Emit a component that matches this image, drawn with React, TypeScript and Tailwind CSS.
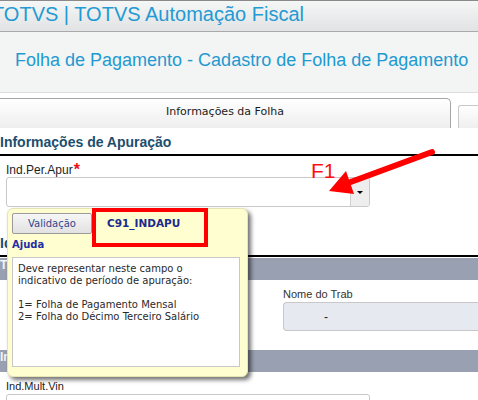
import React from "react";

const sans = { fontFamily: '"Liberation Sans", Arial, sans-serif' };
const verd = { fontFamily: '"DejaVu Sans", Verdana, sans-serif' };

export default function App() {
  return (
    <div
      className="relative w-[478px] h-[400px] overflow-hidden bg-white"
      style={sans}
    >
      {/* Header */}
      <div className="h-[32px] border-t border-b border-t-[#8a8a8a] border-b-[#a9a9a9] bg-gradient-to-b from-[#f5f6f6] to-[#e1e3e4] overflow-hidden whitespace-nowrap">
        <div className="ml-[-8px] pt-[1px] text-[20px] leading-[24px] text-[#239ad3]">
          TOTVS | TOTVS Automação Fiscal
        </div>
      </div>

      {/* Sub header */}
      <div className="h-[61px] bg-[#f3f4f4] border-b border-[#dedede] pl-[15px] pt-[18px] whitespace-nowrap">
        <div className="text-[18px] leading-[20px] text-[#1f9ad0]">
          Folha de Pagamento - Cadastro de Folha de Pagamento
        </div>
      </div>
      <div className="h-[5px] bg-white" />

      {/* Tabs */}
      <div className="flex items-end h-[30px]">
        <div className="w-[451px] h-[30px] border-t border-r border-[#a6a6a6] rounded-tr-[5px] bg-gradient-to-b from-white to-[#eeeeee] flex items-center justify-center pb-[2px]">
          <span className="text-[11px] text-[#1a1a1a]" style={verd}>
            Informações da Folha
          </span>
        </div>
        <div className="ml-[7px] flex-1 h-[23px] border-t border-l border-[#c8c8c8] rounded-tl-[3px] bg-gradient-to-b from-white to-[#efefef]" />
      </div>

      {/* Section heading */}
      <div className="pt-[6px] pb-[4px] border-b-2 border-black">
        <div className="text-[14px] leading-[16px] font-bold text-[#1c4e6e] whitespace-nowrap">
          Informações de Apuração
        </div>
      </div>

      {/* Ind.Per.Apur */}
      <div className="pl-[6px] pt-[7px]">
        <div className="text-[12px] leading-[14px] text-[#1e1e1e] flex items-start">
          <span>Ind.Per.Apur</span>
          <span className="text-[16px] leading-[12px] font-bold text-[#e81010] ml-[1px] mt-[1px]">*</span>
        </div>
        <div className="w-[364px] h-[30px] border border-[#c9c9c9] rounded-[3px] bg-white flex justify-end overflow-hidden">
          <div className="w-[19px] h-full bg-[#eeeeee] border-l border-[#d0d0d0] flex items-center justify-center">
            <div className="w-0 h-0 border-l-[3px] border-r-[3px] border-t-[3px] border-l-transparent border-r-transparent border-t-black" />
          </div>
        </div>
      </div>

      {/* Second section */}
      <div className="mt-[28px] pb-[4px] border-b-2 border-black">
        <div className="text-[14px] leading-[16px] font-bold text-[#1c4e6e] whitespace-nowrap">
          Identificação do Trabalhador
        </div>
      </div>
      <div className="mt-[1px] h-[22px] bg-[#98a0b1]">
        <div className="text-[12px] leading-[14px] font-bold text-[#f4f4f8] whitespace-nowrap">
          Trabalhador
        </div>
      </div>

      <div className="flex pt-[8px]">
        <div className="w-[283px] shrink-0" />
        <div className="flex-1">
          <div className="text-[11px] leading-[13px] text-[#333]">Nome do Trab</div>
          <div className="mt-[1px] h-[29px] border border-r-0 border-[#c8c8c8] rounded-l-[4px] bg-[#e6e9ef] flex items-center pl-[40px] text-[12px] text-[#222]">
            -
          </div>
        </div>
      </div>

      <div className="mt-[19px] h-[22px] bg-[#98a0b1]">
        <div className="text-[12px] leading-[14px] font-bold text-[#f4f4f8] whitespace-nowrap">
          Informações Complementares
        </div>
      </div>

      <div className="pl-[6px] pt-[8px]">
        <div className="text-[11px] leading-[13px] text-[#222]">Ind.Mult.Vin</div>
        <div className="mt-[1px] w-[364px] h-[28px] border border-[#c9c9c9] rounded-[3px] bg-white" />
      </div>

      {/* Tooltip */}
      <div className="absolute left-[7px] top-[208px] w-[241px] h-[169px] bg-[#fefed0] border border-[#e4e4b4] rounded-[6px] shadow-[3px_3px_4px_rgba(0,0,0,0.55)] p-[4px]">
        <div className="flex items-center">
          <div
            className="w-[80px] h-[21px] border border-[#9a9a9a] rounded-[2px] bg-gradient-to-b from-[#f6f6f6] to-[#e2e2e2] flex items-center justify-center text-[10px] text-[#34468c]"
            style={verd}
          >
            Validação
          </div>
          <div
            className="ml-[15px] text-[10.5px] font-bold text-[#1c2a8e]"
            style={verd}
          >
            C91_INDAPU
          </div>
        </div>
        <div
          className="mt-[5px] text-[10px] leading-[12px] font-bold text-[#1f2fa6]"
          style={verd}
        >
          Ajuda
        </div>
        <div
          className="mt-[6px] w-[228px] h-[110px] border border-[#c8c8c8] bg-white pl-[5px] pt-[5px] text-[10px] leading-[12px] text-[#2a2a2a] whitespace-pre"
          style={verd}
        >
          {"Deve representar neste campo o\nindicativo de período de apuração:\n\n1= Folha de Pagamento Mensal\n2= Folha do Décimo Terceiro Salário"}
        </div>
      </div>

      {/* Red annotation box */}
      <div className="absolute left-[92px] top-[208px] w-[116px] h-[39px] border-[4px] border-[#ff0000]" />

      {/* F1 label */}
      <div className="absolute left-[311px] top-[160px] text-[21px] leading-[21px] text-[#ff1010]">
        F1
      </div>

      {/* Arrow */}
      <svg
        className="absolute left-0 top-0"
        width="478"
        height="400"
        viewBox="0 0 478 400"
      >
        <line
          x1="432"
          y1="152"
          x2="348"
          y2="183"
          stroke="#ff0000"
          strokeWidth="6"
          strokeLinecap="round"
        />
        <polygon points="329,191 346,171 354,194" fill="#ff0000" />
      </svg>
    </div>
  );
}
